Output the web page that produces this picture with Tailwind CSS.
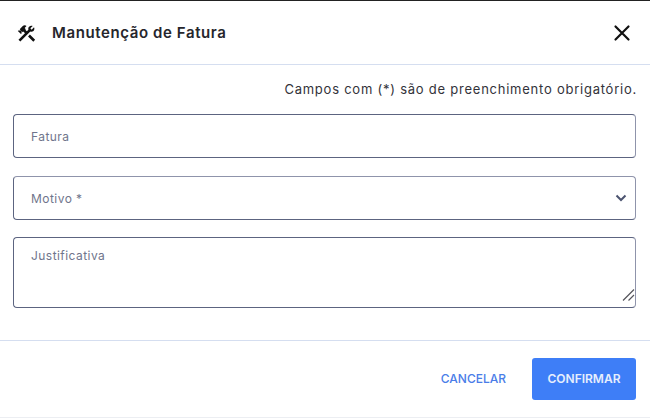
<!DOCTYPE html>
<html lang="pt">
<head>
    <meta charset="UTF-8">
    <title>Manutenção de Fatura</title>
    <script src="https://cdn.jsdelivr.net/npm/@tailwindcss/browser@4"></script>
</head>
<body class="bg-white font-['Inter',sans-serif] overflow-hidden">
    <div class="w-[650px] h-[418px] flex flex-col border-t border-t-[#222] border-b border-b-[#eceef2]">
        <!-- header -->
        <header class="h-[65px] -mt-px pt-[2px] shrink-0 flex items-center justify-between pl-[16px] pr-[18px] border-b border-[#d5def0]">
            <div class="flex items-center gap-[15px]">
                <svg class="w-[21px] h-[21px]" viewBox="0 0 24 24" fill="#111">
                    <path d="M13.78 15.3l6 6 2.11-2.16-6-6-2.11 2.16zM17.5 10c1.93 0 3.5-1.57 3.5-3.5 0-.58-.16-1.12-.41-1.6l-2.7 2.7-1.49-1.49 2.7-2.7c-.48-.25-1.02-.41-1.6-.41C15.57 3 14 4.57 14 6.5c0 .41.08.8.21 1.16l-1.85 1.85-1.78-1.78.71-.71-1.41-1.41L12 3.49c-1.17-1.17-3.07-1.17-4.24 0L4.22 7.03l1.41 1.41H2.81l-.71.71 3.54 3.54.71-.71V9.15l1.41 1.41.71-.71 1.78 1.78-7.41 7.41 2.12 2.12L16.34 9.79c.36.13.75.21 1.16.21z"/>
                </svg>
                <h1 class="text-[15px] font-semibold text-[#26262c] tracking-[0.6px]">Manutenção de Fatura</h1>
            </div>
            <svg class="w-[18px] h-[18px] -translate-x-px" viewBox="0 0 18 18" fill="none" stroke="#111" stroke-width="2.2" stroke-linecap="round">
                <path d="M2.5 2.5l13 13M15.5 2.5l-13 13"/>
            </svg>
        </header>

        <!-- form -->
        <main class="flex-1 flex flex-col pl-[13px] pr-[14px] pt-[15px]">
            <p class="text-right text-[13px] leading-[18px] text-[#33333a] tracking-[0.76px] -mr-px mb-[16px]">Campos com (*) são de preenchimento obrigatório.</p>
            <input type="text" placeholder="Fatura" class="w-full h-[44px] px-[17px] border border-[#5c6480] border-r-[#8f94ab] rounded-[4px] text-[12px] tracking-[0.45px] placeholder:text-[#70758c] outline-none">
            <div class="relative mt-[18px]">
                <input type="text" placeholder="Motivo *" class="w-full h-[44px] px-[17px] border border-[#5c6480] border-r-[#8f94ab] border-t-[#8f94ab] rounded-[4px] text-[12px] tracking-[0.45px] placeholder:text-[#70758c] outline-none">
                <svg class="absolute right-[9px] top-[18px] w-[12px] h-[8px]" viewBox="0 0 12 8" fill="none" stroke="#4c5470" stroke-width="2">
                    <path d="M1.5 1.5L6 6l4.5-4.5"/>
                </svg>
            </div>
            <div class="relative mt-[17px]">
                <textarea placeholder="Justificativa" class="block w-full h-[71px] px-[17px] pt-[10px] border border-[#5c6480] border-r-[#8f94ab] rounded-[4px] text-[12px] leading-[16px] tracking-[0.45px] placeholder:text-[#70758c] outline-none resize-none"></textarea>
                <svg class="absolute right-[1px] bottom-[7px] w-[13px] h-[12px]" viewBox="0 0 13 12" fill="none" stroke="#55555c" stroke-width="1.2">
                    <path d="M1 11.5L12 .5M6.5 11.5L12 6"/>
                </svg>
            </div>
        </main>

        <!-- footer -->
        <footer class="h-[77px] shrink-0 flex items-center justify-end gap-[26px] pl-[13px] pr-[14px] pb-[1px] border-t border-[#d5def0]">
            <button class="text-[12px] font-medium tracking-[0px] text-[#4a7de8]">CANCELAR</button>
            <button class="w-[104px] h-[42px] mt-[1px] bg-[#3e7ef7] rounded-[3px] text-[12px] font-semibold tracking-[0px] text-[#e6eefd]">CONFIRMAR</button>
        </footer>
    </div>
</body>
</html>
